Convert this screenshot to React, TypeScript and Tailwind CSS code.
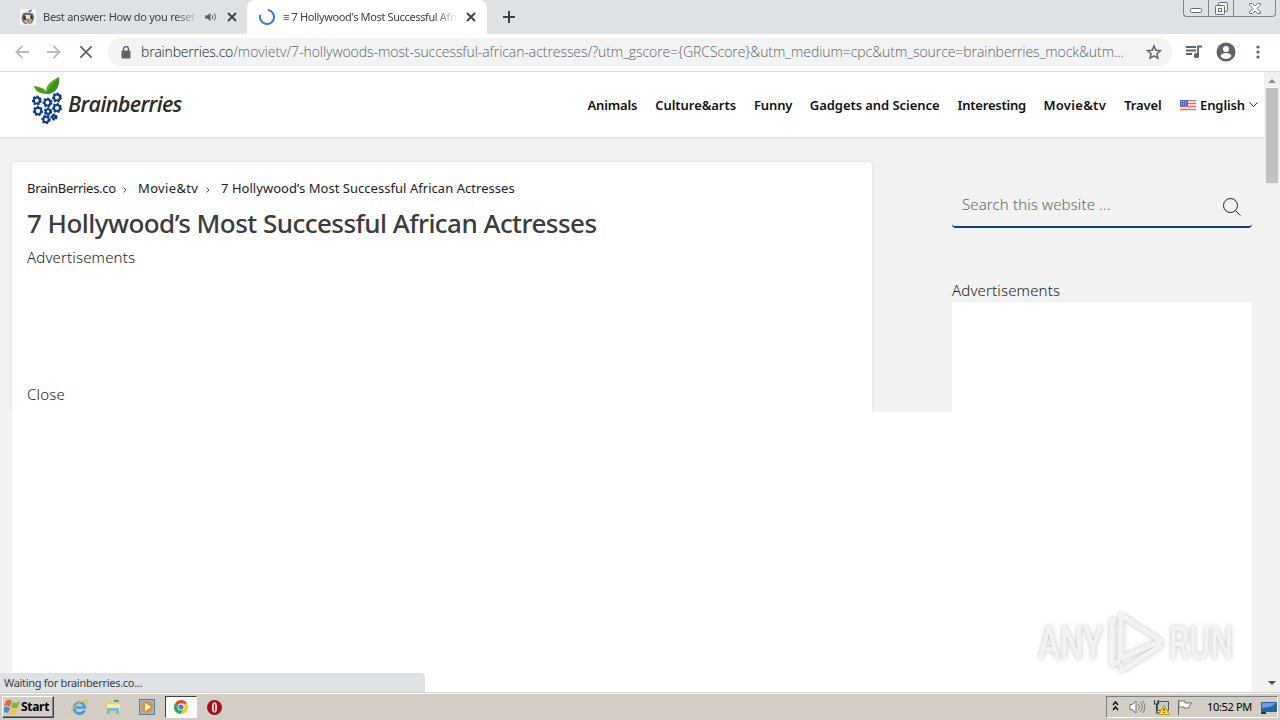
import type { ReactNode } from "react";

const navLinks = [
  { label: "Animals", style: "w-[50px] tracking-[-0.14px]" },
  { label: "Culture&arts", style: "w-[81px] tracking-[-0.05px]" },
  { label: "Funny", style: "w-[38px] tracking-[-0.14px]" },
  { label: "Gadgets and Science", style: "w-[130px] tracking-[-0.06px]" },
  { label: "Interesting", style: "w-[68px] tracking-[-0.22px]" },
  { label: "Movie&tv", style: "w-[63px] tracking-[0.3px]" },
  { label: "Travel", style: "w-[38px] tracking-[-0.14px]" },
];

function CloseIcon({ className, size = 10, stroke = 1.8 }: { className?: string; size?: number; stroke?: number }) {
  return (
    <svg width={size} height={size} viewBox="0 0 10 10" className={className} stroke="currentColor" strokeWidth={stroke}>
      <path d="M1 1l8 8M9 1l-8 8" />
    </svg>
  );
}

function TabBar() {
  return (
    <div className="relative flex h-[34px] bg-[#dee1e6] font-['Noto_Sans','Open_Sans',sans-serif] text-[11px] text-[#3c4043]">
      <div className="flex w-[247px] items-center pl-5">
        <svg width="16" height="16" viewBox="0 0 16 16" className="shrink-0">
          <rect width="16" height="16" fill="#f4f3ef" />
          <path d="M8 3c1-2 3-3 4-2-1 2-2 3-4 2z" fill="#777" />
          <path d="M2 7c1-4 4-4 6-3 3-1 6 0 6 4 0 3-2 7-4 7l-2-1-2 1C3 15 1 11 2 7z" fill="#6d6f70" />
          <path d="M5 6h5v4H5z" fill="#e3dccb" />
          <path d="M3 8l2-2 1 3-1 3zM11 6l2 3-2 3z" fill="#303336" />
          <path d="M4 11h4v3H5zM9 10h3l-1 4H9z" fill="#c9b07d" />
        </svg>
        <span className="ml-[7px] w-[155px] shrink-0 whitespace-nowrap tracking-[-0.25px] [mask-image:linear-gradient(to_right,#000_85%,transparent)]">
          Best answer: How do you reset
        </span>
        <svg width="12" height="10" viewBox="0 0 12 10" className="ml-[7px] shrink-0">
          <path d="M0 3.500h2L5.500 1v8L2 6.500H0z" fill="#5f6368" />
          <path d="M7.500 3v4M9.500 1.500c1 2 1 5 0 7" fill="none" stroke="#5f6368" />
        </svg>
        <CloseIcon className="ml-[10px] shrink-0" />
      </div>
      <div className="flex w-[240px] items-center rounded-t-lg bg-white pl-3">
        <svg width="16" height="16" viewBox="0 0 16 16" className="shrink-0">
          <path d="M9 1.100A7 7 0 1 1 1.400 5.800" fill="none" stroke="#3b78d8" strokeWidth="2" />
        </svg>
        <span className="ml-2 w-[175px] shrink-0 whitespace-nowrap tracking-[-0.37px] [mask-image:linear-gradient(to_right,#000_86%,transparent)]">
          ≡ 7 Hollywood's Most Successful Afri
        </span>
        <CloseIcon className="ml-2 shrink-0" />
      </div>
      <svg width="12" height="12" viewBox="0 0 12 12" className="ml-4 mt-[11px]">
        <path d="M6 0v12M0 6h12" stroke="#3c4043" strokeWidth="2" />
      </svg>
      <div className="absolute right-1 top-0 flex h-[17px] w-[93px] rounded-b border border-t-0 border-[#80858d]">
        <div className="flex w-[25px] items-end justify-center border-r border-[#80858d] pb-[3px]">
          <svg width="12" height="5" viewBox="0 0 12 5"><rect x=".5" y=".5" width="11" height="4" rx="1" fill="#fff" stroke="#666b73" /></svg>
        </div>
        <div className="flex w-[25px] items-center justify-center border-r border-[#80858d]">
          <svg width="13" height="13" viewBox="0 0 13 13" fill="#f4f5f7" stroke="#666b73">
            <rect x="3.500" y=".5" width="9" height="9" rx="1" />
            <rect x=".5" y="3.500" width="9" height="9" rx="1" />
            <rect x="3.500" y="6.500" width="3" height="3" />
          </svg>
        </div>
        <div className="flex flex-1 items-center justify-center">
          <svg width="12" height="11" viewBox="0 0 12 11" fill="#fff" stroke="#737880">
            <path d="M.5.5h3L6 3 8.500.5h3v1.500L8 5.500l3.500 3.500v1.500h-3L6 8l-2.500 2.500h-3V9L4 5.500.5 2z" />
          </svg>
        </div>
      </div>
    </div>
  );
}

function AddressBar() {
  return (
    <div className="flex h-[38px] items-center border-b border-[#d5d7da] bg-white pb-px pl-[15px]">
      <svg width="14" height="14" viewBox="0 0 14 14" fill="none" stroke="#bababa" strokeWidth="1.800">
        <path d="M14 7H1.500M7.500.8L1.300 7l6.200 6.200" />
      </svg>
      <svg width="14" height="14" viewBox="0 0 14 14" className="ml-[18px]" fill="none" stroke="#bababa" strokeWidth="1.800">
        <path d="M0 7h12.500M6.500.8L12.700 7l-6.200 6.200" />
      </svg>
      <CloseIcon size={14} stroke={1.25} className="ml-[18px] text-[#5f6368]" />
      <div className="ml-[15px] flex h-7 w-[1064px] items-center rounded-full bg-[#f1f3f4] pl-[13px]">
        <svg width="10" height="13" viewBox="0 0 10 13" className="shrink-0">
          <rect x="0.500" y="4.500" width="9" height="8" rx="1" fill="#5f6368" />
          <path d="M2.500 5V3a2.500 2.500 0 0 1 5 0v2" fill="none" stroke="#5f6368" strokeWidth="1.400" />
        </svg>
        <span className="-mt-px ml-[10px] w-[990px] whitespace-nowrap font-['Open_Sans','Noto_Sans',sans-serif] text-[14px] font-light tracking-[-0.06px] text-[#5f6368]">
          <span className="tracking-[-0.2px] text-[#202124]">brainberries.co</span>
          {"/movietv/7-hollywoods-most-successful-african-actresses/?utm_gscore={GRCScore}&utm_medium=cpc&utm_source=brainberries_mock&utm..."}
        </span>
        <svg width="16" height="16" viewBox="0 0 24 24" className="ml-[15px] shrink-0" fill="none" stroke="#5f6368" strokeWidth="2.200">
          <path d="M12 2.800l2.700 6.500 7 .6-5.300 4.600 1.600 6.800-6-3.600-6 3.600 1.600-6.800-5.300-4.600 7-.6z" />
        </svg>
      </div>
      <svg width="17" height="14" viewBox="0 0 17 14" className="ml-[13px]" fill="none" stroke="#5f6368" strokeWidth="1.800">
        <path d="M1 2h10M1 5.500h10M1 9h6M13 10V1.500h4" />
        <circle cx="11.500" cy="10.500" r="1.700" fill="#5f6368" />
      </svg>
      <svg width="20" height="20" viewBox="0 0 20 20" className="ml-[14px]">
        <circle cx="10" cy="10" r="9.500" fill="#5f6368" />
        <circle cx="10" cy="7" r="3" fill="#fff" />
        <path d="M4.500 14c1-4 10-4 11 0-2 4-9 4-11 0z" fill="#fff" />
      </svg>
      <svg width="4" height="14" viewBox="0 0 4 14" className="ml-5" fill="#5f6368">
        <circle cx="2" cy="2" r="1.600" /><circle cx="2" cy="7" r="1.600" /><circle cx="2" cy="12" r="1.600" />
      </svg>
    </div>
  );
}

const berries = [[4.8, 23.5, 3], [15.5, 25.5, 3], [25, 20.500, 3], [6, 34, 3.200], [16, 34.500, 2.300], [25, 31, 3], [14, 42.500, 2.700], [22, 40, 1.600]];

function Logo() {
  return (
    <div className="flex items-start pl-8">
      <svg width="31" height="49" viewBox="0 0 31 49" className="mt-[5px]">
        <path d="M15 17C8 17 3 14 2 9c5 1 11 1 13 8z" fill="#4d9c22" />
        <path d="M14 17C13 8 19 4 27 0c1 9-3 17-13 17z" fill="#58ad26" />
        <path d="M14 17C18 9 22 5 27 0c1 9-3 17-13 17z" fill="#3f8c22" />
        {berries.map(([x, y, r], i) => (
          <g key={i} fill="none" stroke="#123f85">
            <circle cx={x} cy={y} r={r} strokeWidth="2.100" />
            <circle cx={x} cy={y} r={r + 1.2} strokeWidth="1.600" strokeDasharray="2.200 1.600" />
          </g>
        ))}
      </svg>
      <span className="ml-[5px] mt-4 whitespace-nowrap font-['Open_Sans','Noto_Sans',sans-serif] text-[21.5px] font-semibold italic leading-8 tracking-[-0.65px] text-[#2b2b2b]">
        Brainberries
      </span>
    </div>
  );
}

function SiteHeader() {
  return (
    <header className="flex h-[65px] shrink-0 items-start justify-between bg-white shadow-[0_1px_2px_#dddddd]">
      <Logo />
      <nav className="mr-[6px] flex h-[67px] items-center gap-x-[17.8px] font-['Noto_Sans','Open_Sans',sans-serif] text-[13px] font-semibold text-[#111]">
        {navLinks.map((link) => (
          <a key={link.label} className={`whitespace-nowrap ${link.style}`}>{link.label}</a>
        ))}
        <div className="flex items-center">
          <svg width="16" height="11" viewBox="0 0 16 11" className="-mt-px">
            <rect width="16" height="11" fill="#fff" />
            <path d="M0 .5h16M0 3.500h16M0 6.500h16M0 9.500h16" stroke="#e36b6b" strokeWidth="1.500" />
            <rect width="8" height="6" fill="#476bd1" />
            <path d="M1 1.500h6M1 4h6" stroke="#b9c9ff" strokeDasharray="1 1" />
          </svg>
          <span className="ml-1 w-[46px] tracking-[-0.1px]">English</span>
          <svg width="9" height="6" viewBox="0 0 9 6" className="-mt-px ml-[3px]" fill="none" stroke="#333">
            <path d="M.5.5l4 4 4-4" />
          </svg>
        </div>
      </nav>
    </header>
  );
}

function Chevron() {
  return (
    <svg width="4" height="6" viewBox="0 0 4 6" fill="none" stroke="#555" className="mt-px">
      <path d="M.5.5L3 3 .5 5.500" />
    </svg>
  );
}

function Article() {
  return (
    <article className="h-full w-[860px] rounded-t-sm bg-white px-[15px] pt-[17px] shadow-[0_0_3px_#dddddd]">
      <div className="flex h-5 items-center whitespace-nowrap text-[13px] text-[#222]">
        <span className="w-[89px] tracking-[-0.3px]">BrainBerries.co</span>
        <span className="ml-[7px] w-[15px]"><Chevron /></span>
        <span className="w-[61px] tracking-[0.35px]">Movie&amp;tv</span>
        <span className="ml-[7px] w-[15px]"><Chevron /></span>
        <span className="tracking-[0.04px]">7 Hollywood’s Most Successful African Actresses</span>
      </div>
      <h1 className="mt-1.5 whitespace-nowrap text-[26px] font-medium leading-9 tracking-[-0.54px] text-[#3c3c3c]">
        7 Hollywood’s Most Successful African Actresses
      </h1>
      <p className="mt-1.5 text-[15px] font-light leading-5 tracking-[0.15px] text-[#222]">Advertisements</p>
      <p className="mt-[117px] text-[15px] font-light leading-5 tracking-[0.2px] text-[#222]">Close</p>
    </article>
  );
}

function Sidebar() {
  return (
    <aside className="flex h-full w-[300px] flex-col pt-[22px]">
      <div className="flex h-11 items-center justify-between rounded border-b-2 border-[#0f4082] pl-[10px] pr-[11px]">
        <span className="-mt-0.5 text-[15px] font-light tracking-[0.12px] text-[#666]">Search this website ...</span>
        <svg width="18" height="18" viewBox="0 0 18 18" className="mt-[3px]" fill="none" stroke="#222">
          <circle cx="7.500" cy="7.500" r="7" />
          <path d="M12.500 12.500l5 5" />
        </svg>
      </div>
      <p className="mt-[52px] text-[15px] font-light leading-5 tracking-[0.15px] text-[#222]">Advertisements</p>
      <div className="mt-0.5 flex-1 bg-white" />
    </aside>
  );
}

function Scrollbar() {
  return (
    <div className="flex w-4 flex-col items-center bg-[#f1f1f1]">
      <svg width="8" height="4" viewBox="0 0 8 4" className="mt-[7px]"><path d="M0 4l4-4 4 4z" fill="#8c8c8c" /></svg>
      <div className="mt-[5px] h-[95px] w-3 bg-[#c1c1c1]" />
      <svg width="8" height="4" viewBox="0 0 8 4" className="mb-[7px] mt-auto"><path d="M0 0h8L4 4z" fill="#505050" /></svg>
    </div>
  );
}

function Watermark() {
  return (
    <div className="absolute left-[1038px] top-[608px] flex items-center font-['Roboto','Liberation_Sans',sans-serif] text-[46px] leading-[64px] text-[#f3f3f3] drop-shadow-[0_0_2px_#c2c2c2]">
      <span className="mt-[3px] w-[65px] origin-left scale-x-[0.72] whitespace-nowrap font-medium">ANY</span>
      <svg width="58" height="64" viewBox="0 0 58 64" className="ml-[5px]" fill="none" stroke="#f3f3f3" strokeWidth="5" strokeLinejoin="round">
        <path d="M13 5v43l40-17z" />
        <path d="M8 9L4 11v44l8-4M13 54l1 6 40-25" />
      </svg>
      <span className="ml-[3px] mt-[3px] w-[65px] origin-left scale-x-[0.7] whitespace-nowrap font-medium">RUN</span>
    </div>
  );
}

function ChromeIcon() {
  return (
    <svg width="14" height="14" viewBox="0 0 16 16">
      <circle cx="8" cy="8" r="8" fill="#f7c62e" />
      <path d="M8 8L1.100 4A8 8 0 0 1 15 4H8z" fill="#e54639" />
      <path d="M8 8L1.100 4A8 8 0 0 0 7 16l4.500-6z" fill="#34a355" />
      <circle cx="8" cy="8" r="4" fill="#fff" />
      <circle cx="8" cy="8" r="3" fill="#4380d9" />
    </svg>
  );
}

function TaskIcon({ children }: { children: ReactNode }) {
  return <div className="flex h-[22px] w-[34px] items-center justify-center">{children}</div>;
}

function Taskbar() {
  return (
    <footer className="flex h-7 items-center border-t border-[#d4d0c8] bg-[#d4cdc5] pl-[2px] shadow-[inset_0_1px_#ffffff] font-['Noto_Sans','Open_Sans',sans-serif] text-[11px] text-black">
      <button className="mt-px flex h-[22px] w-[52px] items-center border border-b-[#404040] border-l-white border-r-[#404040] border-t-white pl-px shadow-[inset_-1px_-1px_#808080]">
        <svg width="16" height="16" viewBox="0 0 16 16">
          <path d="M2 2c2-2 4-1 6 0L6 8C4 6 2 6 0 8z" fill="#e86b32" />
          <path d="M9 3c2 1 4 1 7-1l-2 6c-3 2-5 1-7 0z" fill="#79b83e" />
          <path d="M0 9c2-2 4-1 6 0l-2 5c-2-1-3-1-4 0z" fill="#428bd3" />
          <path d="M7 9c2 1 4 1 7 0l-2 5c-3 2-5 1-7 0z" fill="#f2c53d" />
        </svg>
        <span className="ml-px text-[12px] font-bold tracking-[-0.3px]">Start</span>
      </button>
      <div className="ml-2 mt-px flex items-center">
        <TaskIcon>
          <svg width="17" height="17" viewBox="0 0 17 17" fill="none">
            <path d="M13.500 11.500a5.500 5.500 0 1 1 .5-3H5" stroke="#3d9edc" strokeWidth="2.700" />
            <path d="M1 15C-1 11 8 2 15 1c2 1 1 2 0 4" stroke="#e5bb3e" strokeWidth="1.400" />
          </svg>
        </TaskIcon>
        <TaskIcon>
          <svg width="16" height="16" viewBox="0 0 16 16">
            <path d="M1 2h6l1 2h7v10H1z" fill="#e8ca75" />
            <path d="M2 5h13v7H2z" fill="#fae9a8" />
            <path d="M2 9h12v6h-3v-3H5v3H2z" fill="#79b9da" />
            <path d="M9 2h5" stroke="#54a85b" strokeWidth="2" />
          </svg>
        </TaskIcon>
        <TaskIcon>
          <svg width="16" height="16" viewBox="0 0 16 16">
            <rect x=".5" y=".5" width="15" height="15" fill="#93b8d8" stroke="#4c83b4" />
            <circle cx="8" cy="8" r="6" fill="#f18b22" />
            <path d="M6 4l6 4-6 4z" fill="#fff" />
          </svg>
        </TaskIcon>
        <div className="ml-px flex h-[22px] w-8 items-center justify-center border border-b-white border-l-[#404040] border-r-white border-t-[#404040] bg-[#fafafa]">
          <ChromeIcon />
        </div>
        <TaskIcon>
          <svg width="15" height="15" viewBox="0 0 15 15">
            <circle cx="7.500" cy="7.500" r="7.500" fill="#a80d16" />
            <ellipse cx="7.500" cy="7.500" rx="2.600" ry="5.200" fill="#ede2dd" />
            <ellipse cx="7.500" cy="7.500" rx=".8" ry="4" fill="#9b2d31" />
          </svg>
        </TaskIcon>
      </div>
      <div className="ml-auto mr-[2px] mt-px flex h-[22px] w-[172px] items-center border border-b-white border-l-[#808080] border-r-white border-t-[#808080] pl-[5px]">
        <svg width="7" height="10" viewBox="0 0 7 10" className="-mt-0.5" fill="none" stroke="#111" strokeWidth="1.500"><path d="M1 4l2.500-3L6 4M1 9l2.500-3L6 9" /></svg>
        <svg width="17" height="14" viewBox="0 0 17 14" className="ml-[10px]" fill="#fff" stroke="#777">
          <path d="M1 4.500h2L7 1v12L3 9.500H1z" />
          <path d="M9 4c2 2 2 4 0 6M11 2c3 3 3 7 0 10M13.500 1c3 3 3 9 0 12" fill="none" />
        </svg>
        <svg width="17" height="16" viewBox="0 0 17 16" className="ml-[7px]">
          <path d="M4.500 2.500h11v9h-11z" fill="#c3cbd0" stroke="#555" />
          <path d="M1.500 1v4h4V1M3.500 5v9h4" fill="none" stroke="#444" strokeWidth="1.200" />
          <path d="M11 6l5.500 9.500h-11z" fill="#ffdb20" stroke="#a88d25" strokeWidth=".7" />
          <path d="M11 9v3M11 13v1" stroke="#222" />
        </svg>
        <svg width="16" height="16" viewBox="0 0 16 16" className="ml-[7px]">
          <path d="M1.500 1v15" stroke="#666" />
          <path d="M2 2h6v2h7l-3 3v2H7V8H2z" fill="#fff" stroke="#777" />
        </svg>
        <span className="ml-[14px] w-[46px] whitespace-nowrap tracking-[-0.35px]">10:52 PM</span>
        <svg width="16" height="13" viewBox="0 0 16 13" className="ml-2">
          <rect y="1" width="16" height="10" rx="1" fill="#2264af" />
          <path d="M1 2h14L9 6 1 7z" fill="#6ba0d5" />
          <path d="M0 11h5v2H0z" fill="#333" />
        </svg>
      </div>
    </footer>
  );
}

export default function App() {
  return (
    <div className="relative flex h-[720px] w-[1280px] flex-col overflow-hidden bg-white">
      <TabBar />
      <AddressBar />
      <main className="flex h-[620px]">
        <div className="flex flex-1 flex-col bg-[#f2f2f2] font-['Noto_Sans','Open_Sans',sans-serif]">
          <SiteHeader />
          <div className="mx-3 mt-[25px] flex h-[250px] justify-between">
            <Article />
            <Sidebar />
          </div>
          <div className="z-10 mx-3 flex-1 bg-white" />
        </div>
        <Scrollbar />
      </main>
      <Taskbar />
      <div className="absolute bottom-7 left-0 z-20 flex h-[19px] w-[425px] items-center rounded-tr bg-[#dee1e6] pl-1 pt-0.5 font-['Noto_Sans','Open_Sans',sans-serif] text-[11px] tracking-[-0.3px] text-[#3c4043]">
        Waiting for brainberries.co...
      </div>
      <div className="pointer-events-none absolute inset-0 z-20">
        <Watermark />
      </div>
    </div>
  );
}
